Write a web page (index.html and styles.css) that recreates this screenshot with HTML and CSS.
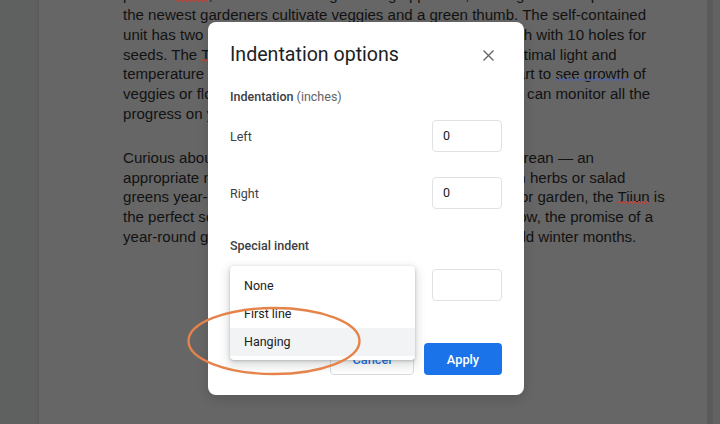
FILE: index.html
```html
<!DOCTYPE html>
<html lang="en">
<head>
<meta charset="utf-8">
<title>Indentation options</title>
<link rel="stylesheet" href="styles.css">
</head>
<body>
<div class="screen">
  <div class="gutter"></div>
  <main class="page">
    <div class="doc">
      <p class="para">planter. <span class="spell">Tiiun</span>, LG's new indoor gardening appliance, is designed to help even<br>the newest gardeners cultivate veggies and a green thumb. The self-contained<br>unit has two shelves, each holding a seed package tray, each with 10 holes for<br>seeds. The <span class="spell">Tiiun</span> automatically monitors and provides the optimal light and<br>temperature for growth, so you'll only need four weeks to start to <span class="gram">see growth</span> of<br>veggies or flowers. With the LG ThinQ smartphone app, you can monitor all the<br>progress on your phone.</p>
      <p class="para">Curious about the name? LG's Tiiun means “to sprout” in Korean — an<br>appropriate name for a device that lets you easily grow fresh herbs or salad<br>greens year-round. Whether you lack a balcony or an outdoor garden, the <span class="spell">Tiiun</span> is<br>the perfect solution. Even when the ground is covered in snow, the promise of a<br>year-round garden is totally within reach, even during the cold winter months.</p>
    </div>
  </main>
  <div class="gutter-r"></div>
</div>

<section class="dialog" role="dialog" aria-label="Indentation options">
  <header class="dlg-head">
    <h1 class="dlg-title">Indentation options</h1>
    <button class="close" aria-label="Close">
      <svg width="11" height="11" viewBox="0 0 11 11"><path d="M0.5 0.5 L10.5 10.5 M10.5 0.5 L0.5 10.5" stroke="#5f6368" stroke-width="1.3" fill="none"/></svg>
    </button>
  </header>
  <div class="section-label"><span class="strong">Indentation</span> <span class="muted">(inches)</span></div>
  <div class="row row-first">
    <span class="label">Left</span>
    <div class="field">0</div>
  </div>
  <div class="row row-second">
    <span class="label">Right</span>
    <div class="field">0</div>
  </div>
  <div class="section-label special">Special indent</div>
  <div class="row row-first">
    <div class="select"></div>
    <div class="field"></div>
  </div>
  <div class="actions">
    <button class="btn btn-cancel">Cancel</button>
    <button class="btn btn-apply">Apply</button>
  </div>
  <ul class="menu">
    <li class="item">None</li>
    <li class="item">First line</li>
    <li class="item item-active">Hanging</li>
  </ul>
</section>

<svg class="annot" width="200" height="90" viewBox="0 0 200 90">
  <ellipse cx="100" cy="45" rx="85.5" ry="33" fill="none" stroke="#e5834a" stroke-width="2.4"/>
</svg>
</body>
</html>
```

FILE: styles.css
```css
* { box-sizing: border-box; }
html, body { margin: 0; padding: 0; }
body {
  width: 720px;
  height: 424px;
  overflow: hidden;
  background: #606261;
  position: relative;
}
.screen {
  display: flex;
  height: 424px;
  overflow: hidden;
}
.gutter {
  flex: 0 0 39px;
  background: #5f6160;
  border-right: 2px solid #5a5b5a;
}
.page {
  flex: 0 0 668px;
  background: #666666;
  overflow: hidden;
}
.gutter-r {
  flex: 1;
  background: #626262;
  border-left: 6px solid #5a5a5a;
}
.doc {
  margin-top: -14.6px;
  padding-left: 84px;
  font-family: "Liberation Sans", Arial, sans-serif;
  font-size: 15.07px;
  line-height: 19.75px;
  color: #121212;
  white-space: nowrap;
}
.para { margin: 0 0 24.25px 0; }
.spell, .gram {
  position: relative;
}
.spell::after, .gram::after {
  content: "";
  position: absolute;
  left: 0;
  right: 0;
  bottom: 1px;
  height: 3px;
  background-repeat: repeat-x;
  background-size: 4px 3px;
}
.spell::after {
  background-image:
    radial-gradient(circle at 1px 0.8px, #b8463c 0.8px, transparent 1.1px),
    radial-gradient(circle at 3px 2.2px, #b8463c 0.8px, transparent 1.1px);
}
.gram::after {
  background-image:
    radial-gradient(circle at 1px 0.8px, #55639a 0.8px, transparent 1.1px),
    radial-gradient(circle at 3px 2.2px, #55639a 0.8px, transparent 1.1px);
}

.dialog {
  position: absolute;
  left: 208px;
  top: 22px;
  width: 316px;
  height: 373px;
  background: #ffffff;
  border-radius: 8px;
  padding: 19px 22px 0 22px;
  font-family: Roboto, "Noto Sans", sans-serif;
  color: #3c4043;
  box-shadow: 0 4px 12px rgba(0,0,0,0.15);
}
.dlg-head {
  display: flex;
  align-items: center;
  justify-content: space-between;
  height: 28px;
}
.dlg-title {
  margin: 0;
  font-size: 19.6px;
  font-weight: 400;
  line-height: 28px;
  color: #202124;
}
.close {
  width: 28px;
  height: 28px;
  display: flex;
  align-items: center;
  justify-content: center;
  border: 0;
  padding: 0;
  background: none;
}
.section-label {
  margin-top: 20px;
  font-size: 12.5px;
  line-height: 16px;
  color: #3c4043;
}
.section-label.special { margin-top: 29px; font-weight: 500; }
.strong { font-weight: 500; }
.muted { color: #5f6368; }
.row {
  display: flex;
  align-items: center;
  justify-content: space-between;
  height: 32px;
}
.row-first { margin-top: 15px; }
.row-second { margin-top: 25px; }
.label {
  font-size: 12.5px;
  color: #3c4043;
}
.field {
  width: 70px;
  height: 32px;
  border: 1px solid #e0e2e5;
  border-radius: 4px;
  padding-left: 10px;
  font-size: 12.5px;
  line-height: 30px;
  color: #202124;
}
.select {
  width: 185px;
  height: 32px;
  border: 1px solid #dadce0;
  border-radius: 4px;
}
.actions {
  margin-top: 42px;
  display: flex;
  justify-content: flex-end;
  gap: 10px;
}
.btn {
  height: 32px;
  border-radius: 4px;
  font-family: Roboto, "Noto Sans", sans-serif;
  font-size: 12.8px;
  font-weight: 500;
  padding: 0;
}
.btn-cancel {
  width: 84px;
  background: #ffffff;
  border: 1px solid #dadce0;
  color: #1a73e8;
}
.btn-apply {
  width: 78px;
  background: #1a73e8;
  border: 0;
  color: #ffffff;
}
.menu {
  position: absolute;
  left: 22px;
  top: 244px;
  width: 185px;
  margin: 0;
  padding: 6px 0 4px 0;
  list-style: none;
  background: #ffffff;
  border-radius: 4px;
  box-shadow: 0 1px 3px rgba(60,64,67,0.3), 0 4px 8px 3px rgba(60,64,67,0.15);
}
.item {
  height: 28px;
  line-height: 28px;
  padding-left: 14px;
  font-size: 12.5px;
  color: #202124;
}
.item-active { background: #f1f3f4; }
.annot {
  position: absolute;
  left: 174px;
  top: 296px;
}
```
